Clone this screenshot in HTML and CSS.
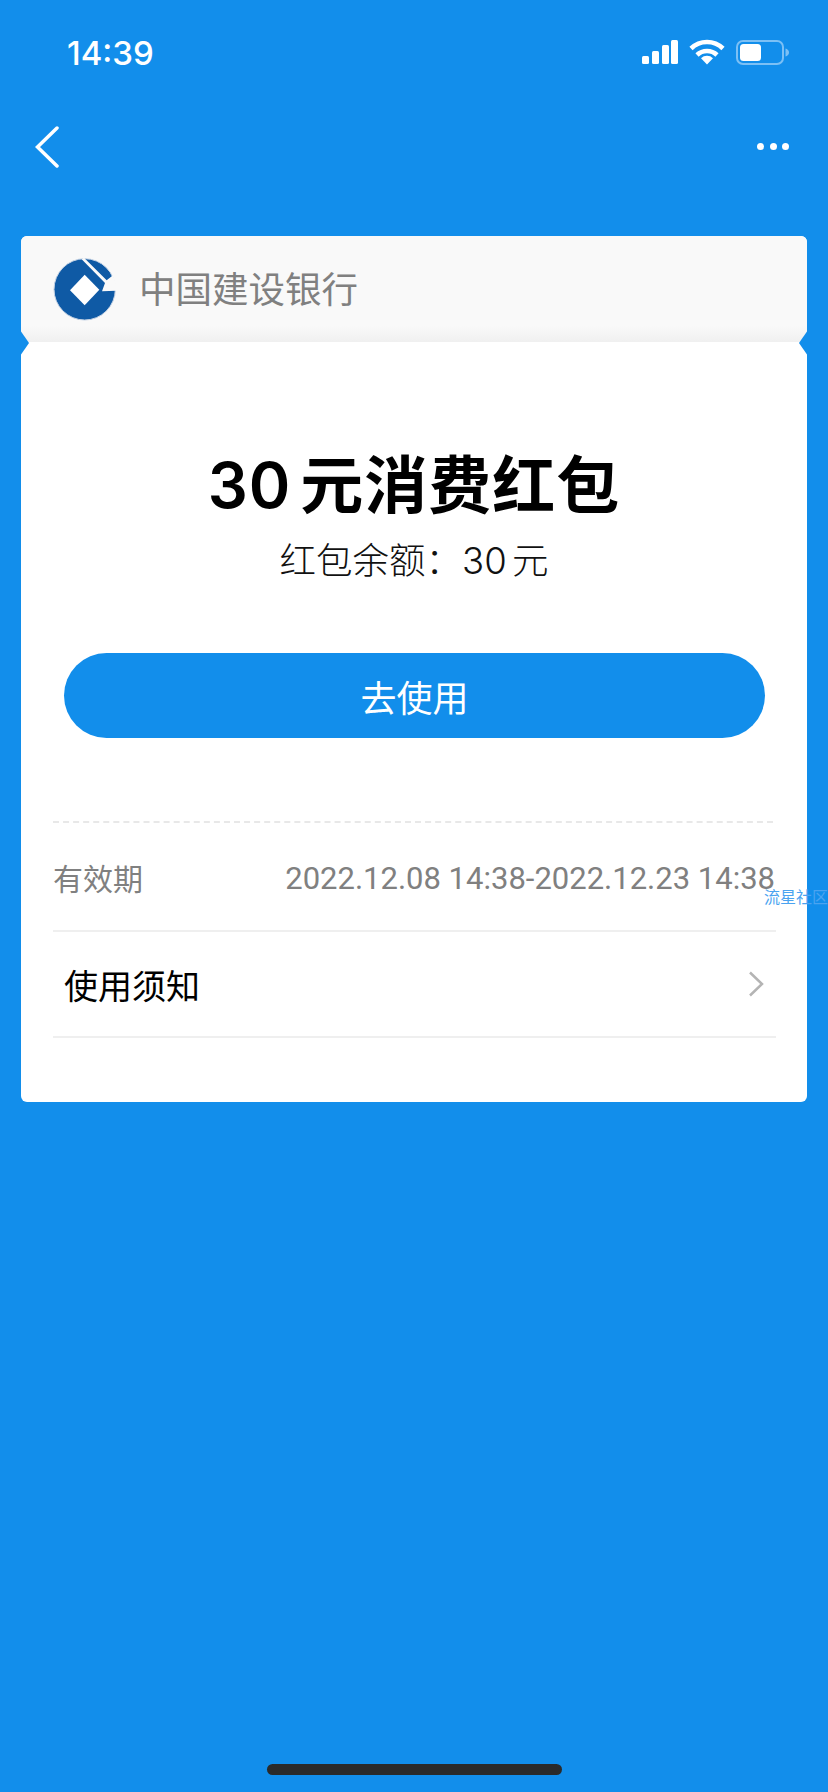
FILE: index.html

```html
<!DOCTYPE html>
<html lang="zh-CN">
<head>
    <meta charset="UTF-8">
    <meta name="viewport" content="width=device-width, initial-scale=1.0">
    <title>红包详情</title>
    <link rel="stylesheet" href="styles.css">
</head>
<body>
    <div class="status-bar">
        <span class="time">14:39</span>
        <div class="status-icons">
            <svg width="36" height="24" viewBox="0 0 36 24" fill="#fff">
                <rect x="0" y="16" width="7" height="8" rx="1.5"/>
                <rect x="10" y="11" width="7" height="13" rx="1.5"/>
                <rect x="20" y="5" width="7" height="19" rx="1.5"/>
                <rect x="29" y="0" width="7" height="24" rx="1.5"/>
            </svg>
            <svg width="36" height="26" viewBox="0 0 36 26" fill="none" stroke="#fff" stroke-width="4.6">
                <path d="M2 9.500a23 23 0 0 1 32 0"/>
                <path d="M8 16a14.500 14.500 0 0 1 20 0"/>
                <path d="M18 25.500l-6-6.300a8.600 8.600 0 0 1 12 0z" fill="#fff" stroke="none"/>
            </svg>
            <svg width="53" height="25" viewBox="0 0 53 25">
                <rect x="1" y="1" width="46" height="23" rx="6" fill="none" stroke="#7cc0f5" stroke-width="2"/>
                <rect x="4" y="4" width="21" height="17" rx="3.500" fill="#fff"/>
                <path d="M49.500 8.500c2 .6 3.500 2 3.500 4s-1.500 3.400-3.500 4z" fill="#7cc0f5"/>
            </svg>
        </div>
    </div>

    <div class="nav-bar">
        <svg width="24" height="42" viewBox="0 0 24 42" fill="none" stroke="#fff" stroke-width="3.500" stroke-linecap="round">
            <path d="M22 2L2.500 21 22 40"/>
        </svg>
        <div class="more">
            <span></span><span></span><span></span>
        </div>
    </div>

    <div class="card">
        <div class="card-head">
            <svg class="logo" width="74" height="74" viewBox="0 0 222 222">
                <circle cx="110" cy="112" r="92" fill="#0f5aa5" stroke="#c4d2e4" stroke-width="3"/>
                <path d="M110 68L154 113 110 160 66 115z" fill="#fff"/>
                <path d="M101 22L108 17 176 85 195 70 206 100 204 116 162 118 171 93z" fill="#f9f9f9"/>
            </svg>
            <span class="bank-name">中国建设银行</span>
        </div>
        <div class="notch notch-left"></div>
        <div class="notch notch-right"></div>

        <div class="card-body">
            <h1 class="title">30 元消费红包</h1>
            <p class="balance">红包余额：30 元</p>
            <button class="use-btn">去使用</button>

            <div class="info">
                <div class="row-valid">
                    <span class="valid-label">有效期</span>
                    <span class="valid-date">2022.12.08 14:38-2022.12.23 14:38</span>
                </div>
                <div class="row-notice">
                    <span>使用须知</span>
                    <svg width="16" height="26" viewBox="0 0 16 26" fill="none" stroke="#b4b4b4" stroke-width="2.500">
                        <path d="M2 1.500L14 13 2 24.500"/>
                    </svg>
                </div>
            </div>
        </div>
    </div>

    <div class="watermark">流星社区</div>
    <div class="home-bar"></div>
</body>
</html>
```

FILE: styles.css

```css
html, body {
    margin: 0;
    height: 100%;
}
body {
    position: relative;
    height: 1792px;
    overflow: hidden;
    background-color: #128eeb;
    font-family: Inter, "Noto Sans CJK SC", sans-serif;
}
.status-bar {
    height: 106px;
    box-sizing: border-box;
    padding: 35px 39px 0 67px;
    display: flex;
    justify-content: space-between;
    align-items: flex-start;
    color: #fff;
}
.time {
    font-size: 33px;
    line-height: 36px;
    font-weight: 500;
}
.status-icons {
    display: flex;
    align-items: center;
    gap: 11px;
    margin-top: 4px;
}
.nav-bar {
    height: 130px;
    box-sizing: border-box;
    padding: 20px 39px 0 35px;
    display: flex;
    justify-content: space-between;
    align-items: flex-start;
}
.more {
    display: flex;
    gap: 5.500px;
    margin-top: 17px;
}
.more span {
    width: 7px;
    height: 7px;
    border-radius: 50%;
    background-color: #fff;
}
.card {
    position: relative;
    margin: 0 21px;
    background-color: #fff;
    border-radius: 6px;
}
.card-head {
    height: 106px;
    box-sizing: border-box;
    padding: 16px 27px 0;
    display: flex;
    align-items: flex-start;
    gap: 17px;
    background: linear-gradient(#f9f9f9 85%, #f0f0f0);
    border-radius: 6px 6px 0 0;
}
.bank-name {
    font-size: 36.500px;
    line-height: 76px;
    color: #808080;
}
.notch {
    position: absolute;
    top: 94px;
    width: 9px;
    height: 26px;
    background-color: #128eeb;
}
.notch-left {
    left: -1px;
    clip-path: polygon(0 0, 100% 50%, 0 100%);
}
.notch-right {
    right: -1px;
    clip-path: polygon(100% 0, 0 50%, 100% 100%);
}
.card-body {
    padding: 0 32px 64px;
    text-align: center;
}
.title {
    margin: 0;
    padding-top: 105px;
    font-size: 63px;
    line-height: 76px;
    font-weight: 600;
    color: #000;
    word-spacing: -8px;
    letter-spacing: 1px;
}
.balance {
    margin: 14px 0 0;
    font-size: 36.500px;
    line-height: 48px;
    color: #111;
    font-weight: 300;
    word-spacing: -5px;
}
.use-btn {
    display: block;
    width: 701px;
    height: 85px;
    margin: 68px 0 0 11px;
    background-color: #128eeb;
    color: #fff;
    border: none;
    border-radius: 43px;
    font-family: inherit;
    font-size: 36px;
}
.info {
    margin-top: 83px;
    border-top: 2px dashed #e8e8e8;
    margin-right: 2px;
}
.row-valid {
    height: 107px;
    display: flex;
    justify-content: space-between;
    align-items: center;
    margin-right: -3px;
    border-bottom: 2px solid #efefef;
    color: #808080;
}
.valid-label {
    font-size: 30px;
}
.valid-date {
    font-family: Roboto, sans-serif;
    font-size: 31px;
    margin: 3px 1px 0 0;
}
.row-notice {
    height: 104px;
    display: flex;
    justify-content: space-between;
    align-items: center;
    padding: 0 12px 0 11px;
    margin-right: -3px;
    border-bottom: 2px solid #efefef;
    font-size: 34px;
    color: #000;
}
.watermark {
    position: absolute;
    left: 764px;
    top: 885px;
    font-size: 16px;
    line-height: 24px;
    color: #4aa3f0;
    white-space: nowrap;
}
.home-bar {
    position: absolute;
    left: 267px;
    top: 1764px;
    width: 295px;
    height: 11px;
    border-radius: 5.500px;
    background-color: #2a2a2a;
}
```
